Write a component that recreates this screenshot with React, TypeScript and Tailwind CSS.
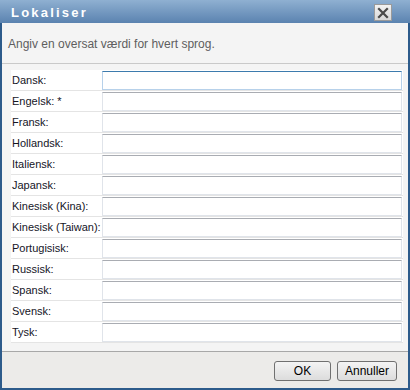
import React from "react";

const langs = [
  "Dansk:",
  "Engelsk: *",
  "Fransk:",
  "Hollandsk:",
  "Italiensk:",
  "Japansk:",
  "Kinesisk (Kina):",
  "Kinesisk (Taiwan):",
  "Portugisisk:",
  "Russisk:",
  "Spansk:",
  "Svensk:",
  "Tysk:",
];

export default function App() {
  return (
    <div
      className="w-[410px] h-[390px] flex flex-col bg-[#2d5b8b] px-[2px] pb-[2px]"
      style={{ fontFamily: '"Liberation Sans", Arial, sans-serif' }}
    >
      {/* Title bar */}
      <div className="h-[23px] -mx-[2px] flex items-center justify-between pl-[11px] pr-[18px] bg-gradient-to-b from-[#8fb0d1] to-[#5b83b0]">
        <span className="text-white font-bold text-[13px] tracking-[2.2px] leading-none mt-[1px]">Lokaliser</span>
        <div className="w-[18px] h-[17px] mt-[2px] bg-gradient-to-b from-[#f2f2f2] to-[#d8d8d8] border border-[#9a9a9a] flex items-center justify-center">
          <svg width="12" height="12" viewBox="0 0 12 12">
            <path d="M2 2 L10 10 M10 2 L2 10" stroke="#4a4a4a" strokeWidth="2.2" strokeLinecap="square" />
          </svg>
        </div>
      </div>
      <div className="flex-1 flex flex-col bg-[#f4f4f4]">
        {/* Instruction */}
        <div className="h-[41px] flex items-center pl-[6px] pt-[2px] text-[12px] text-[#5e5e5e] border-b border-[#c9c9c9]">
          Angiv en oversat værdi for hvert sprog.
        </div>
        {/* Form */}
        <div className="pt-[6px] pl-[9px] pr-[5px]">
          <div className="bg-white">
            {langs.map((l, i) => (
              <div key={l} className="h-[21px] flex items-center border-b border-[#e4e4e4]">
                <div className="w-[91px] pl-[1px] text-[11px] text-[#15151f] leading-none">{l}</div>
                <div
                  className={
                    "w-[300px] h-[19px] bg-white " +
                    (i === 0
                      ? "border border-[#b7d1ea] border-t-[#3d7bad]"
                      : "border border-[#e0e4ea] border-t-[#a9acb2]")
                  }
                />
              </div>
            ))}
          </div>
        </div>
        <div className="h-[8px] bg-[#f4f4f4]" />
        {/* Footer */}
        <div className="flex-1 bg-[#ecebe9] border-t border-[#a8a8a8] flex justify-end items-start pt-[9px] pr-[11px] gap-[6px]">
          <button className="w-[57px] h-[20px] rounded-[3px] border border-[#707070] bg-gradient-to-b from-[#f4f4f4] to-[#dcdcdc] text-[12px] text-black leading-none">
            OK
          </button>
          <button className="w-[60px] h-[20px] rounded-[3px] border border-[#707070] bg-gradient-to-b from-[#f4f4f4] to-[#dcdcdc] text-[12px] text-black leading-none">
            Annuller
          </button>
        </div>
      </div>
    </div>
  );
}
